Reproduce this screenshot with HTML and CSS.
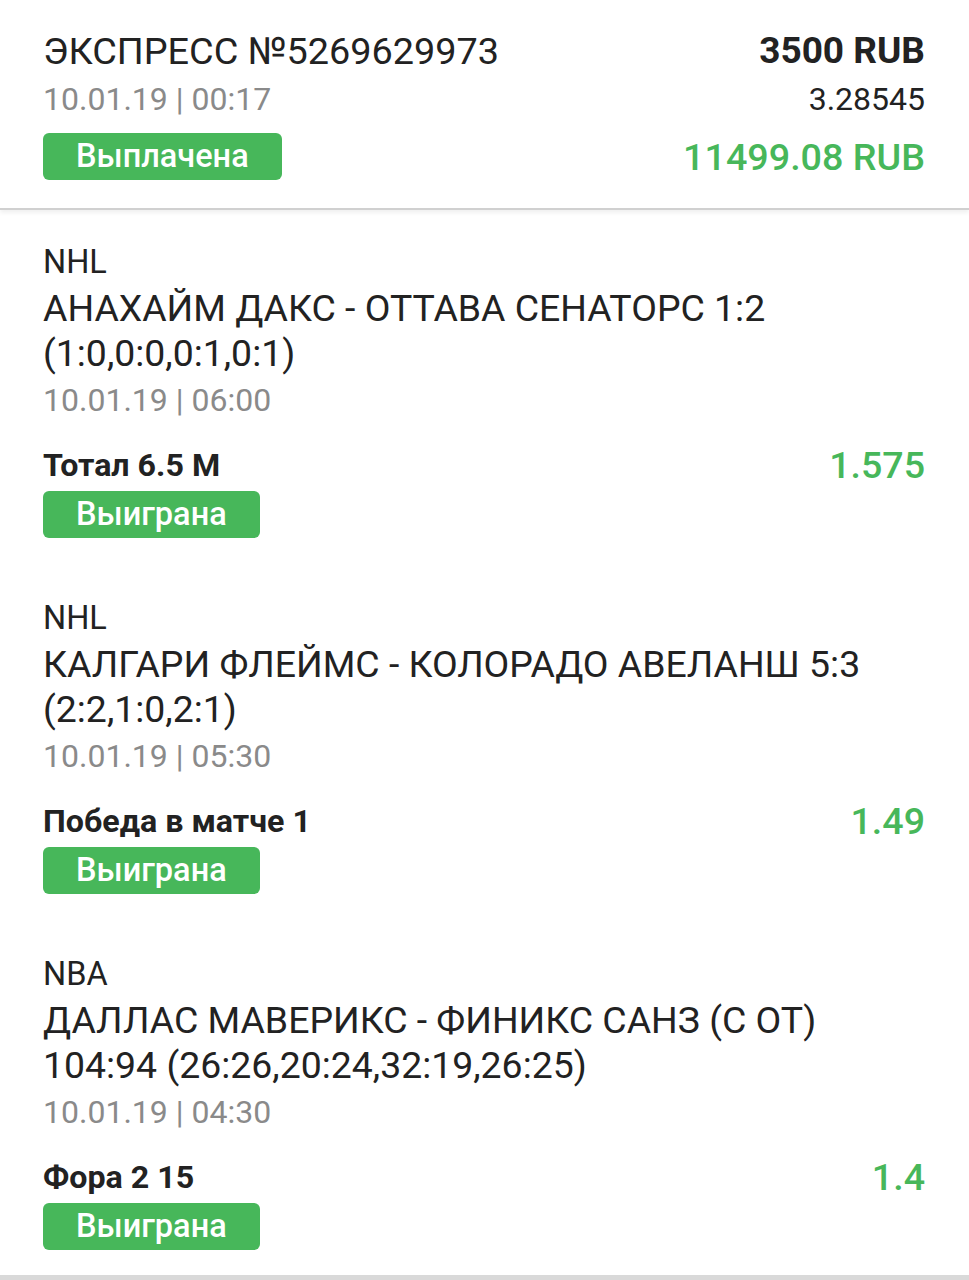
FILE: index.html
```html
<!DOCTYPE html>
<html lang="ru">
<head>
  <meta charset="UTF-8" />
  <meta name="viewport" content="width=device-width, initial-scale=1.0"/>
  <title>Экспресс №5269629973</title>
  <link rel="stylesheet" href="styles.css">
</head>
<body>
  <div class="coupon">
    <div class="coupon-head">
      <div class="row">
        <div class="title">ЭКСПРЕСС №5269629973</div>
        <div class="stake">3500 RUB</div>
      </div>
      <div class="row">
        <div class="date">10.01.19 | 00:17</div>
        <div class="total-coef">3.28545</div>
      </div>
      <div class="row row-status">
        <span class="badge">Выплачена</span>
        <div class="payout">11499.08 RUB</div>
      </div>
    </div>

    <div class="events">
      <div class="event">
        <div class="league">NHL</div>
        <div class="match">АНАХАЙМ ДАКС - ОТТАВА СЕНАТОРС 1:2 (1:0,0:0,0:1,0:1)</div>
        <div class="date">10.01.19 | 06:00</div>
        <div class="row row-bet">
          <div class="bet">Тотал 6.5 М</div>
          <div class="coef">1.575</div>
        </div>
        <span class="badge">Выиграна</span>
      </div>

      <div class="event">
        <div class="league">NHL</div>
        <div class="match">КАЛГАРИ ФЛЕЙМС - КОЛОРАДО АВЕЛАНШ 5:3 (2:2,1:0,2:1)</div>
        <div class="date">10.01.19 | 05:30</div>
        <div class="row row-bet">
          <div class="bet">Победа в матче 1</div>
          <div class="coef">1.49</div>
        </div>
        <span class="badge">Выиграна</span>
      </div>

      <div class="event">
        <div class="league">NBA</div>
        <div class="match">ДАЛЛАС МАВЕРИКС - ФИНИКС САНЗ (С ОТ) 104:94 (26:26,20:24,32:19,26:25)</div>
        <div class="date">10.01.19 | 04:30</div>
        <div class="row row-bet">
          <div class="bet">Фора 2 15</div>
          <div class="coef">1.4</div>
        </div>
        <span class="badge">Выиграна</span>
      </div>
    </div>
  </div>
</body>
</html>
```

FILE: styles.css
```css
* {
  box-sizing: border-box;
  font-family: Roboto, 'Noto Sans', sans-serif;
}

body {
  margin: 0;
  background-color: #ffffff;
  color: #222222;
}

.coupon {
  width: 969px;
  height: 1280px;
  overflow: hidden;
  border-bottom: 5px solid #d9d9d9;
}

.coupon-head {
  padding: 27px 44px 28px 43px;
  border-bottom: 2px solid #d0d0d0;
  box-shadow: 0 3px 4px rgba(0, 0, 0, 0.06);
}

.row {
  display: flex;
  justify-content: space-between;
  align-items: center;
}

.title {
  font-size: 37.8px;
  line-height: 48px;
}

.stake {
  font-size: 37px;
  line-height: 48px;
  font-weight: 700;
}

.date {
  font-size: 32px;
  line-height: 48px;
  color: #8a8a8a;
}

.total-coef {
  font-size: 32px;
  line-height: 48px;
}

.row-status {
  margin-top: 10px;
}

.badge {
  display: inline-block;
  background-color: #47b75a;
  color: #ffffff;
  font-size: 32.5px;
  font-weight: 500;
  line-height: 47px;
  padding: 0 33px;
  border-radius: 6px;
}

.payout {
  font-size: 37.7px;
  font-weight: 500;
  color: #47b75a;
}

.events {
  padding: 0 44px 0 43px;
}

.event {
  height: 356px;
  padding-top: 30px;
}

.league {
  font-size: 32.5px;
  line-height: 44px;
}

.match {
  margin-top: 2px;
  font-size: 37.4px;
  line-height: 45px;
}

.row-bet {
  margin-top: 19px;
  margin-bottom: 4px;
}

.bet {
  font-size: 32.2px;
  line-height: 44px;
  font-weight: 700;
}

.coef {
  font-size: 37.6px;
  line-height: 44px;
  font-weight: 500;
  color: #47b75a;
}
```
